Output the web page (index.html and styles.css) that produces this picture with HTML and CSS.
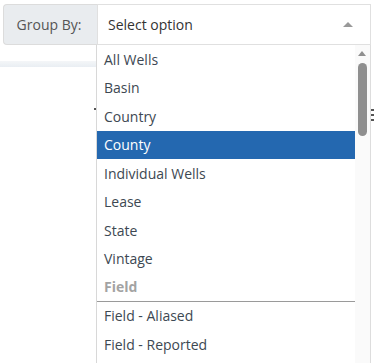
FILE: index.html
```html
<!DOCTYPE html>
<html lang="en">
<head>
  <meta charset="UTF-8" />
  <title>Group By</title>
  <link rel="stylesheet" href="styles.css">
</head>
<body>
  <div class="page">
    <div class="group-by">
      <div class="group-label">Group By:</div>
      <div class="group-select">
        <span class="placeholder">Select option</span>
        <span class="caret"></span>
      </div>
    </div>
    <div class="table-head"></div>
    <div class="handle handle-left"></div>
    <div class="handle handle-right"></div>

    <div class="dropdown">
      <ul class="options">
        <li>All Wells</li>
        <li>Basin</li>
        <li>Country</li>
        <li class="active">County</li>
        <li>Individual Wells</li>
        <li>Lease</li>
        <li>State</li>
        <li>Vintage</li>
        <li class="group">Field</li>
        <li>Field - Aliased</li>
        <li>Field - Reported</li>
      </ul>
      <div class="scrollbar">
        <span class="arrow-up"></span>
        <span class="thumb"></span>
      </div>
    </div>
  </div>
</body>
</html>
```

FILE: styles.css
```css
body {
  margin: 0;
  font-family: "Open Sans", "Liberation Sans", sans-serif;
  font-size: 14px;
  background: #fff;
  overflow: hidden;
}
.page {
  position: relative;
  height: 363px;
  padding: 4px 0 0 3px;
  box-sizing: border-box;
}
.group-by {
  display: flex;
  width: 368px;
  height: 41px;
}
.group-label {
  width: 94px;
  box-sizing: border-box;
  background: #e9ecef;
  border: 1px solid #dcdcdc;
  border-right: none;
  border-radius: 4px 0 0 4px;
  color: #555;
  display: flex;
  align-items: center;
  justify-content: center;
  padding-right: 3px;
}
.group-select {
  flex: 1;
  border: 1px solid #e0e0e0;
  display: flex;
  align-items: center;
  justify-content: space-between;
  padding: 0 17px 0 10px;
  color: #333;
}
.caret {
  width: 0;
  height: 0;
  border-left: 5px solid transparent;
  border-right: 5px solid transparent;
  border-bottom: 5px solid #999;
}
.table-head {
  margin: 16px 0 0 -3px;
  width: 96px;
  height: 6px;
  background: linear-gradient(#f4f6f8, #e9eef3);
}
.handle {
  position: absolute;
  width: 3px;
  height: 14px;
  background: repeating-linear-gradient(#555 0 2px, transparent 2px 5px);
}
.handle-left {
  left: 94px;
  top: 108px;
  height: 4px;
}
.handle-right {
  left: 371px;
  top: 109px;
}
.dropdown {
  position: absolute;
  left: 96px;
  top: 45px;
  width: 275px;
  height: 330px;
  display: flex;
  background: #fff;
  border-left: 1px solid #d8d8d8;
  border-right: 1px solid #ddd;
  box-sizing: border-box;
}
.options {
  flex: 1;
  list-style: none;
  margin: 0;
  padding: 0;
}
.options li {
  height: 28.5px;
  display: flex;
  align-items: center;
  padding-left: 7px;
  color: #3d4852;
}
.options li.active {
  background: #2468b0;
  color: #fff;
}
.options li.group {
  font-weight: bold;
  color: #a3a3a3;
  border-bottom: 1px solid #9a9a9a;
  box-sizing: border-box;
}
.scrollbar {
  width: 15px;
  background: #fafafa;
  position: relative;
}
.arrow-up {
  position: absolute;
  left: 3px;
  top: 6px;
  border-left: 4.5px solid transparent;
  border-right: 4.5px solid transparent;
  border-bottom: 5px solid #8f8f8f;
}
.thumb {
  position: absolute;
  left: 3px;
  top: 18px;
  width: 9px;
  height: 73px;
  border-radius: 5px;
  background: #8f8f8f;
}
```
